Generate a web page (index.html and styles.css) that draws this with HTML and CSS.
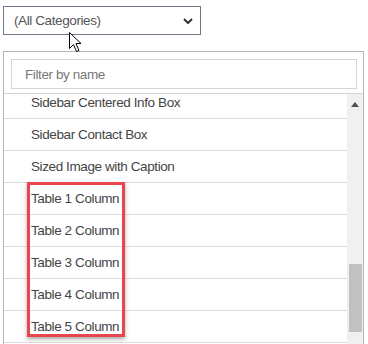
FILE: index.html
```
<!DOCTYPE html>
<html lang="en">
<head>
    <meta charset="UTF-8">
    <meta name="viewport" content="width=device-width, initial-scale=1.0">
    <title>Snippet Picker</title>
    <link rel="stylesheet" href="styles.css">
</head>
<body>
    <div class="picker">
        <div class="category-select">
            <span>(All Categories)</span>
            <svg class="chevron" width="10" height="6" viewBox="0 0 10 6">
                <path d="M1 1 L5 5 L9 1" fill="none" stroke="#333" stroke-width="2"/>
            </svg>
        </div>

        <div class="dropdown">
            <div class="search-area">
                <input type="text" class="filter" placeholder="Filter by name">
            </div>
            <div class="list-area">
                <ul class="items">
                    <li>Sidebar Centered Info Box</li>
                    <li>Sidebar Contact Box</li>
                    <li>Sized Image with Caption</li>
                    <li>Table 1 Column</li>
                    <li>Table 2 Column</li>
                    <li>Table 3 Column</li>
                    <li>Table 4 Column</li>
                    <li>Table 5 Column</li>
                </ul>
                <div class="scrollbar">
                    <div class="arrow-up"></div>
                    <div class="thumb"></div>
                </div>
            </div>
        </div>

        <div class="highlight"></div>

        <svg class="cursor" width="13" height="21" viewBox="0 0 13 21">
            <path d="M0.5 0.5 L0.5 16.5 L4.5 12.5 L7.5 19.5 L10 18.5 L7 11.5 L12 11.5 Z" fill="#fff" stroke="#000" stroke-width="1"/>
        </svg>
    </div>
</body>
</html>
```

FILE: styles.css
```
body {
    font-family: "Liberation Sans", Arial, sans-serif;
    margin: 0;
    padding: 0;
    background-color: #fff;
    color: #444;
    overflow: hidden;
}

.picker {
    position: relative;
    height: 344px;
    overflow: hidden;
}

.category-select {
    display: flex;
    align-items: center;
    justify-content: space-between;
    box-sizing: border-box;
    width: 198px;
    height: 29px;
    margin: 6px 0 0 3px;
    padding: 0 7px 0 10px;
    border: 1px solid #6e7a8a;
    font-size: 13.5px;
    letter-spacing: -0.4px;
    color: #555;
}

.chevron {
    margin-top: 1px;
}

.dropdown {
    box-sizing: border-box;
    width: 361px;
    margin: 16px 0 0 3px;
    border: 1px solid #b5b5b5;
    border-bottom: none;
    height: 300px;
}

.search-area {
    padding: 7px 6px 4px 7px;
    border-bottom: 1px solid #d6d6d6;
}

.filter {
    display: block;
    box-sizing: border-box;
    width: 100%;
    height: 30px;
    padding: 0 13px;
    border: 1px solid #d4d4d4;
    font-family: inherit;
    font-size: 13.5px;
    letter-spacing: -0.4px;
    color: #444;
    outline: none;
}

.filter::placeholder {
    color: #777;
}

.list-area {
    display: flex;
    height: 260px;
}

.items {
    flex: 1;
    list-style: none;
    margin: 0;
    padding: 0;
    overflow: hidden;
}

.items li {
    height: 31px;
    line-height: 31px;
    padding-left: 27px;
    border-bottom: 1px solid #dcdcdc;
    font-size: 13.5px;
    letter-spacing: -0.4px;
    color: #444;
    white-space: nowrap;
}

.items li:first-child {
    margin-top: -7px;
}

.scrollbar {
    position: relative;
    width: 16px;
    background: #f0f0f0;
}

.arrow-up {
    width: 0;
    height: 0;
    margin: 8px auto 0;
    border-left: 4px solid transparent;
    border-right: 4px solid transparent;
    border-bottom: 5px solid #505050;
}

.thumb {
    position: absolute;
    left: 2px;
    right: 1px;
    top: 170px;
    height: 68px;
    background: #c1c1c1;
}

.highlight {
    position: absolute;
    left: 27px;
    top: 182px;
    width: 92px;
    height: 149px;
    border: 3px solid #e8464c;
    box-shadow: 0 2px 4px rgba(0, 0, 0, 0.35);
}

.cursor {
    position: absolute;
    left: 69px;
    top: 32px;
}
```
